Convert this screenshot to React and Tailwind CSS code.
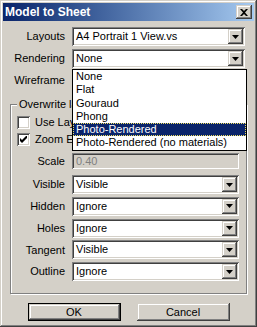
import React from "react";

const raised =
  "shadow-[inset_-1px_-1px_#404040,inset_1px_1px_#d4d0c8,inset_-2px_-2px_#808080,inset_2px_2px_#ffffff]";
const sunken =
  "shadow-[inset_1px_1px_#808080,inset_-1px_-1px_#ffffff,inset_2px_2px_#404040,inset_-2px_-2px_#d4d0c8]";

function Arrow() {
  return (
    <svg width="7" height="4" viewBox="0 0 7 4">
      <path d="M0 0H7L3.5 4Z" fill="#000" />
    </svg>
  );
}

function Combo({ value, className = "" }) {
  return (
    <div className={`flex h-[19px] bg-white p-[2px] ${sunken} ${className}`}>
      <span className="flex-1 pl-[2px] leading-[15px] whitespace-nowrap overflow-hidden">{value}</span>
      <div className={`flex h-[15px] w-[15px] items-center justify-center bg-[#d4d0c8] ${raised}`}>
        <Arrow />
      </div>
    </div>
  );
}

function Row({ label, labelW, children, h = "h-[19px]" }) {
  return (
    <div className={`flex items-center ${h}`}>
      <div className={`text-right ${labelW}`}>{label}</div>
      <div className="ml-[7px] flex-1">{children}</div>
    </div>
  );
}

function Check({ checked, label }) {
  return (
    <div className="flex h-[13px] items-center gap-[5px] pl-[6px]">
      <div className={`flex h-[13px] w-[13px] shrink-0 items-center justify-center bg-white ${sunken}`}>
        {checked && (
          <svg width="7" height="7" viewBox="0 0 7 7">
            <path d="M0 2V5L2 7L7 2V-1L2 4Z" fill="#000" />
          </svg>
        )}
      </div>
      <span className="whitespace-nowrap leading-[13px]">{label}</span>
    </div>
  );
}

export default function App() {
  const items = ["None", "Flat", "Gouraud", "Phong", "Photo-Rendered", "Photo-Rendered (no materials)"];
  return (
    <div
      className={`relative flex h-[327px] w-[257px] flex-col bg-[#d4d0c8] p-[3px] text-[11px] text-black ${raised}`}
      style={{ fontFamily: '"Liberation Sans", Arial, sans-serif' }}
    >
      {/* Title bar */}
      <div className="flex h-[18px] shrink-0 items-center justify-between bg-gradient-to-r from-[#0a246a] to-[#a6caf0] pl-[2px] pr-[2px]">
        <span className="text-[12px] font-bold text-white leading-none">Model to Sheet</span>
        <div className={`flex h-[14px] w-[16px] items-center justify-center bg-[#d4d0c8] ${raised}`}>
          <svg width="8" height="7" viewBox="0 0 8 7">
            <path d="M0 0H2L4 2L6 0H8L5 3.5L8 7H6L4 5L2 7H0L3 3.5Z" fill="#000" />
          </svg>
        </div>
      </div>

      {/* Top rows */}
      <div className="mt-[6px] flex shrink-0 flex-col gap-[3px] pr-[9px]">
        <Row label="Layouts" labelW="w-[62px]">
          <Combo value="A4 Portrait 1 View.vs" />
        </Row>
        <Row label="Rendering" labelW="w-[62px]">
          <div className="relative">
            <Combo value="None" />
            <div className="absolute left-0 top-[20px] z-10 w-[175px] border border-black bg-white">
              {items.map((it) => (
                <div
                  key={it}
                  className={`h-[13.3px] pl-[3px] leading-[13px] whitespace-nowrap ${
                    it === "Photo-Rendered"
                      ? "bg-[#0a246a] text-white outline outline-1 outline-dotted outline-[#f0e060] -outline-offset-1"
                      : ""
                  }`}
                >
                  {it}
                </div>
              ))}
            </div>
          </div>
        </Row>
        <Row label="Wireframe" labelW="w-[62px]">
          <Combo value="None" />
        </Row>
      </div>

      {/* Group box */}
      <div className="relative ml-[7px] mr-[7px] mt-[14px] h-[190px] shrink-0 border border-[#808080] shadow-[inset_1px_1px_#ffffff,1px_1px_#ffffff]">
        <div className="absolute left-[6px] top-[-7px] bg-[#d4d0c8] px-[2px] leading-[13px] whitespace-nowrap">
          Overwrite layout settings
        </div>
        <div className="flex flex-col pt-[11px] pr-[7px]">
          <Check label="Use Layout scale" />
          <div className="mt-[4px]">
            <Check checked label="Zoom Extents" />
          </div>
          <div className="mt-[7px]">
            <Row label="Scale" labelW="w-[54px]" h="h-[16px]">
              <div className={`flex h-[16px] items-center bg-[#d4d0c8] pl-[4px] text-[#808080] ${sunken}`}>
                0.40
              </div>
            </Row>
          </div>
          <div className="mt-[6px] flex flex-col gap-[2.75px]">
            <Row label="Visible" labelW="w-[54px]">
              <Combo value="Visible" />
            </Row>
            <Row label="Hidden" labelW="w-[54px]">
              <Combo value="Ignore" />
            </Row>
            <Row label="Holes" labelW="w-[54px]">
              <Combo value="Ignore" />
            </Row>
            <Row label="Tangent" labelW="w-[54px]">
              <Combo value="Visible" />
            </Row>
            <Row label="Outline" labelW="w-[54px]">
              <Combo value="Ignore" />
            </Row>
          </div>
        </div>
      </div>

      {/* Buttons */}
      <div className="mt-[9px] flex shrink-0 justify-center gap-[16px]">
        <div className="h-[18px] w-[93px] border border-black">
          <div className={`flex h-full w-full items-center justify-center bg-[#d4d0c8] ${raised}`}>OK</div>
        </div>
        <div className={`flex h-[18px] w-[93px] items-center justify-center bg-[#d4d0c8] ${raised}`}>Cancel</div>
      </div>
    </div>
  );
}
